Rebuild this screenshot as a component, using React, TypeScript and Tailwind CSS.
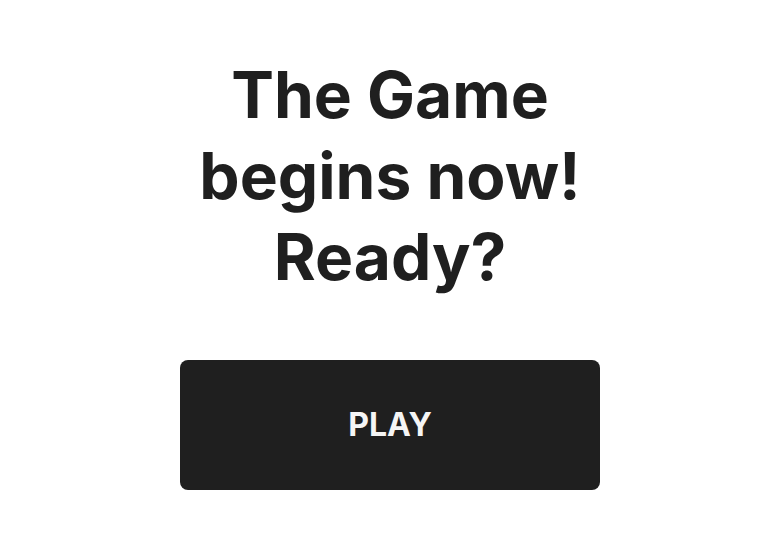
export default function App() {
  return (
    <div
      className="flex min-h-screen w-full flex-col items-center bg-white pt-[54px]"
      style={{ fontFamily: "Inter, 'Noto Sans', sans-serif" }}
    >
      <div className="flex w-[420px] flex-col items-center">
        <h1 className="w-[440px] text-center text-[64px] font-bold leading-[81px] text-[#1f1f1f]">
          The Game begins now! Ready?
        </h1>
        <button
          type="button"
          className="mt-[63px] flex h-[130px] w-[420px] items-center justify-center rounded-[8px] bg-[#1f1f1f] text-[32px] font-bold text-[#f5f5f5]"
        >
          PLAY
        </button>
      </div>
    </div>
  );
}
